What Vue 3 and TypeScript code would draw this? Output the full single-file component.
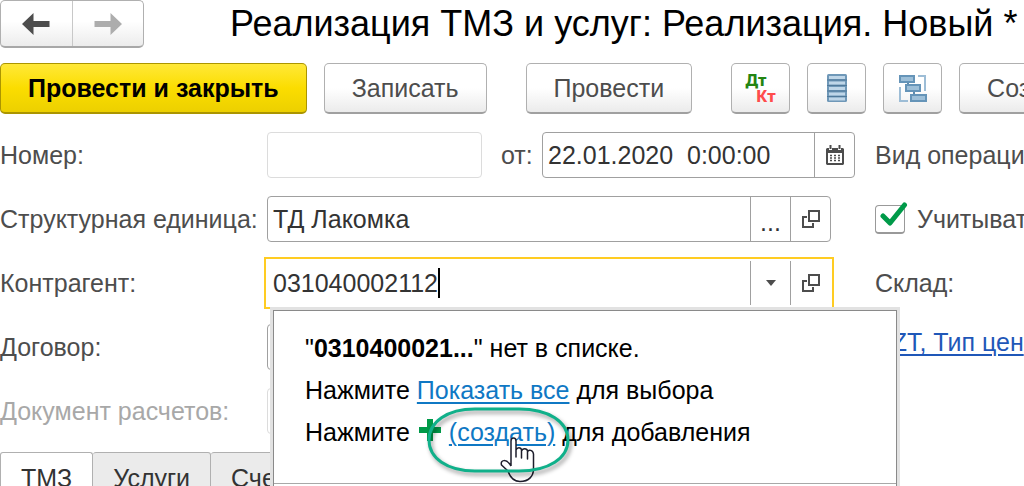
<script setup lang="ts">
import { ref } from 'vue'

const docNumber = ref('')
const docDate = ref('22.01.2020  0:00:00')
const unit = ref('ТД Лакомка')
const partner = ref('031040002112')
const contract = ref('')
const settlement = ref('')
const accounted = ref(true)
const tabs = ['ТМЗ', 'Услуги', 'Счет']
const activeTab = ref('ТМЗ')
</script>

<template>
  <main class="window">
    <header class="head">
      <nav class="history" aria-label="История">
        <button type="button" aria-label="Назад">
          <svg width="28" height="22" viewBox="0 0 28 22"><path d="M0 11 11.500 0V8H27.500V14H11.500V22Z" fill="#4d4d4d" /></svg>
        </button>
        <button type="button" aria-label="Вперед">
          <svg width="28" height="22" viewBox="0 0 28 22"><path d="M28 11 16.500 0V8H.5V14H16.500V22Z" fill="#adadad" /></svg>
        </button>
      </nav>
      <h1>Реализация ТМЗ и услуг: Реализация. Новый *</h1>
    </header>

    <div class="toolbar">
      <div class="group">
        <button type="button" class="btn primary">Провести и закрыть</button>
        <button type="button" class="btn">Записать</button>
      </div>
      <button type="button" class="btn">Провести</button>
      <div class="group">
        <button type="button" class="btn icon" aria-label="Дебет и кредит">
          <span class="dtkt"><span class="dt">Дт</span><span class="kt">Кт</span></span>
        </button>
        <button type="button" class="btn icon" aria-label="Список">
          <svg width="20" height="28" viewBox="0 0 20 28">
            <rect x="0" y="0" width="20" height="28" rx="1.500" fill="#6f98b8" />
            <path d="M2 3.500H18M2 9H18M2 14.500H18M2 20H18M2 25H18" stroke="#bfd6e8" stroke-width="3" />
            <path d="M0 6H20M0 11.500H20M0 17H20M0 22.500H20" stroke="#50799a" stroke-width="1" />
          </svg>
        </button>
        <button type="button" class="btn icon" aria-label="Структура подчиненности">
          <svg width="29" height="29" viewBox="0 0 29 29">
            <g fill="none" stroke="#9dbdd6" stroke-width="2">
              <path d="M20 2H27V17M2 13V27H10" />
              <path d="M10 8V10M16 17V20" stroke="#5f8bad" />
            </g>
            <g fill="#9dbfd8" stroke="#6594b8" stroke-width="2">
              <rect x="2" y="2" width="14" height="6" />
              <rect x="8" y="11" width="14" height="6" />
              <rect x="13" y="21" width="15" height="6" />
            </g>
          </svg>
        </button>
        <button type="button" class="btn">Создать</button>
      </div>
    </div>

    <form class="form" @submit.prevent>
      <div class="row">
        <label class="caption" for="number">Номер:</label>
        <div class="field muted number"><input id="number" v-model="docNumber" type="text" /></div>
        <label class="from" for="date">от:</label>
        <div class="field">
          <input id="date" v-model="docDate" type="text" />
          <button type="button" aria-label="Выбрать дату">
            <svg width="18" height="20" viewBox="0 0 18 20">
              <path d="M1 3H3V5H6V3H12V5H15V3H17L18 4V19L17 20H1L0 19V4Z" fill="#4d4d4d" />
              <path d="M3.500 0H5.500V4H3.500ZM12.500 0H14.500V4H12.500Z" fill="#4d4d4d" />
              <rect x="2" y="8" width="14" height="10" fill="#fff" />
              <path d="M4 10.500H14M4 13H14M4 15.500H14" stroke="#4d4d4d" stroke-width="1.500" stroke-dasharray="2 2" />
            </svg>
          </button>
        </div>
      </div>
      <div class="side">Вид операции</div>

      <div class="row inset">
        <label class="caption" for="unit">Структурная единица:</label>
        <div class="field">
          <input id="unit" v-model="unit" type="text" />
          <button type="button" class="dots" aria-label="Выбрать">...</button>
          <button type="button" aria-label="Открыть подразделение">
            <svg width="18" height="18" viewBox="0 0 18 18" fill="none" stroke="#4d4d4d" stroke-width="2"><path d="M7 1H17V11H7ZM5 7H1V17H11V13" /></svg>
          </button>
        </div>
      </div>
      <label class="side check">
        <span class="tick">
          <input v-model="accounted" type="checkbox" />
          <svg v-if="accounted" width="28" height="26" viewBox="0 0 28 26"><path d="M3 14 10 21 24.500 3" fill="none" stroke="#009a49" stroke-width="5" stroke-linejoin="round" stroke-linecap="round" /></svg>
        </span>
        Учитывать
      </label>

      <div class="row inset">
        <label class="caption" for="partner">Контрагент:</label>
        <div class="field active">
          <input id="partner" v-model="partner" type="text" />
          <span class="caret"></span>
          <button type="button" aria-label="Раскрыть список">
            <svg width="10" height="6" viewBox="0 0 10 6"><path d="M0 0H10L5 6Z" fill="#4d4d4d" /></svg>
          </button>
          <button type="button" aria-label="Открыть контрагента">
            <svg width="18" height="18" viewBox="0 0 18 18" fill="none" stroke="#4d4d4d" stroke-width="2"><path d="M7 1H17V11H7ZM5 7H1V17H11V13" /></svg>
          </button>
          <div class="popup">
            <div class="message">
              <p>"<b>0310400021...</b>" нет в списке.</p>
              <p>Нажмите <a href="#all">Показать все</a> для выбора</p>
              <p>
                Нажмите
                <svg class="plus" width="22" height="22" viewBox="0 0 22 22"><path d="M8 0H14V8H22V14H14V22H8V14H0V8H8Z" fill="#009a49" /></svg>
                <a href="#create">(создать)</a> для добавления
              </p>
            </div>
            <svg class="hand" width="36" height="48" viewBox="0 0 36 48">
              <path d="M11 29V4C11 0 16 0 16 4V20V13C17 10 21 10 21.500 13V21V14C22.500 11 27 11 27.500 14V22V15C28.500 12 33 13 33.500 17V32C33.500 39 29 44.500 20 44.500C13 44.500 10 40 8 34L1.500 28C0 23 6 21 11 29" fill="#fff" stroke="#1d1d2b" stroke-width="1.500" stroke-linejoin="round" />
            </svg>
            <svg class="ring" width="152" height="76" viewBox="0 0 152 76">
              <path d="M50 5H94C124 5 143 18 143 36C143 54 124 67 94 67H50C22 67 4 54 4 36C4 18 22 5 50 5Z" fill="none" stroke="#10b08a" stroke-width="3" />
            </svg>
          </div>
        </div>
      </div>
      <div class="side">Склад:</div>

      <div class="row inset">
        <label class="caption" for="contract">Договор:</label>
        <div class="field"><input id="contract" v-model="contract" type="text" /></div>
      </div>
      <div class="side prices"><a href="#prices">KZT, Тип цен</a></div>

      <div class="row inset">
        <label class="caption off" for="settlement">Документ расчетов:</label>
        <div class="field muted"><input id="settlement" v-model="settlement" type="text" disabled /></div>
      </div>
    </form>

    <div class="tabs" role="tablist">
      <button
        v-for="tab in tabs"
        :key="tab"
        type="button"
        role="tab"
        :aria-selected="tab === activeTab"
        :class="{ current: tab === activeTab }"
        @click="activeTab = tab"
      >{{ tab }}</button>
    </div>
  </main>
</template>

<style>
body { margin: 0; background: #fff; }
</style>

<style scoped>
.window {
  height: 100vh;
  overflow: hidden;
  box-sizing: border-box;
  font: 25px/28px "Liberation Sans", Arial, sans-serif;
  color: #4d4d4d;
  white-space: nowrap;
}
.window * { box-sizing: border-box; }
button, input { font: inherit; color: inherit; margin: 0; }
button { padding: 0; border: 0; background: none; cursor: pointer; }
svg { display: block; flex: none; }

.head { display: flex; align-items: center; gap: 86px; height: 48px; }
.history {
  display: flex;
  flex: none;
  width: 144px;
  height: 48px;
  border: 1px solid #b0b0b0;
  border-bottom: 2px solid #a8a8a8;
  border-radius: 5px;
  background: linear-gradient(#fff 45%, #ececec);
}
.history button { flex: 1; display: flex; align-items: center; justify-content: center; }
.history button + button { border-left: 1px solid #c8c8c8; }
h1 { margin: 0; font-size: 36px; line-height: 48px; font-weight: 400; color: #000; }

.toolbar { display: flex; gap: 39px; margin-top: 15px; }
.group { display: flex; gap: 17px; }
.btn {
  flex: none;
  display: flex;
  align-items: center;
  justify-content: center;
  height: 51px;
  padding: 0 27px;
  border: 1px solid #b0b0b0;
  border-bottom: 2px solid #a0a0a0;
  border-radius: 5px;
  background: linear-gradient(#fff 50%, #ebebeb);
}
.primary {
  font-weight: 700;
  color: #000;
  border-color: #ab9500;
  background: linear-gradient(#ffe838, #fbdd00 50%, #ecd000);
}
.icon { width: 59px; padding: 0; }
.dtkt {
  display: flex;
  flex-direction: column;
  width: 30px;
  font: 800 16px/16px "Noto Sans", sans-serif;
}
.dt { text-align: left; color: #238512; }
.kt { text-align: right; color: #ff4c4c; }

.form {
  display: grid;
  grid-template-columns: minmax(0, 1fr) 149px;
  column-gap: 20px;
  row-gap: 18px;
  margin-top: 18px;
}
.row { display: flex; align-items: center; height: 46px; }
.inset { padding-right: 24px; }
.caption { flex: none; width: 267px; }
.off { color: #a8a8a8; }
.from { flex: none; width: 60px; padding-left: 19px; }
.field {
  position: relative;
  flex: 1;
  display: flex;
  min-width: 0;
  height: 46px;
  border: 1px solid #a0a0a0;
  border-radius: 4px;
  background: #fff;
}
.muted { border-color: #dcdcdc; }
.number { flex: none; width: 215px; }
.field input {
  flex: 1;
  min-width: 0;
  padding: 0 5px;
  border: 0;
  outline: 0;
  background: none;
  color: #333;
}
.field button {
  flex: none;
  display: flex;
  align-items: center;
  justify-content: center;
  width: 40px;
  border-left: 1px solid #a0a0a0;
}
.field .dots { padding-top: 6px; color: #333; }
.active { border-color: transparent; outline: 2px solid #fc2; outline-offset: 1px; border-radius: 0; }
.caret { position: absolute; left: 170px; top: 7px; width: 2px; height: 30px; background: #000; }

.side { display: flex; align-items: center; min-width: 0; height: 46px; }
.check { gap: 12px; }
.tick { position: relative; flex: none; width: 30px; height: 29px; }
.tick input {
  display: block;
  width: 30px;
  height: 29px;
  margin: 0;
  appearance: none;
  border: 1px solid #999;
  border-bottom-width: 2px;
  border-radius: 4px;
}
.tick svg { position: absolute; left: 5px; top: -3px; }
.prices { height: 36px; }
.prices a { color: #1f57b8; text-decoration-thickness: 2px; text-underline-offset: 3px; }

.popup {
  position: absolute;
  z-index: 2;
  left: 5px;
  top: 49px;
  width: 624px;
  height: 240px;
  border: 1px solid #8a8a8a;
  box-shadow: 0 0 0 3px #e2e2e2;
  background: #fff;
  color: #000;
}
.message { height: 173px; padding: 16px 31px 0; border-bottom: 1px solid #a8a8a8; }
.message p { margin: 0; line-height: 42px; }
.message a { color: #0f78c4; text-decoration-thickness: 2px; text-underline-offset: 3px; }
.plus { display: inline-block; margin: 0 8px 0 2px; vertical-align: 0; }
.ring { position: absolute; left: 151px; top: 93px; filter: drop-shadow(2px 3px 2px #0006); }
.hand { position: absolute; left: 226px; top: 126px; }

.tabs { display: flex; margin-top: 18px; }
.tabs button {
  height: 52px;
  padding: 0 20px;
  border: 1px solid #b0b0b0;
  border-left-width: 0;
  background: #ebebeb;
  border-radius: 3px 3px 0 0;
  color: #333;
}
.tabs button:first-child { border-left-width: 1px; }
.tabs .current { background: #fff; border-bottom-color: #fff; }
</style>
